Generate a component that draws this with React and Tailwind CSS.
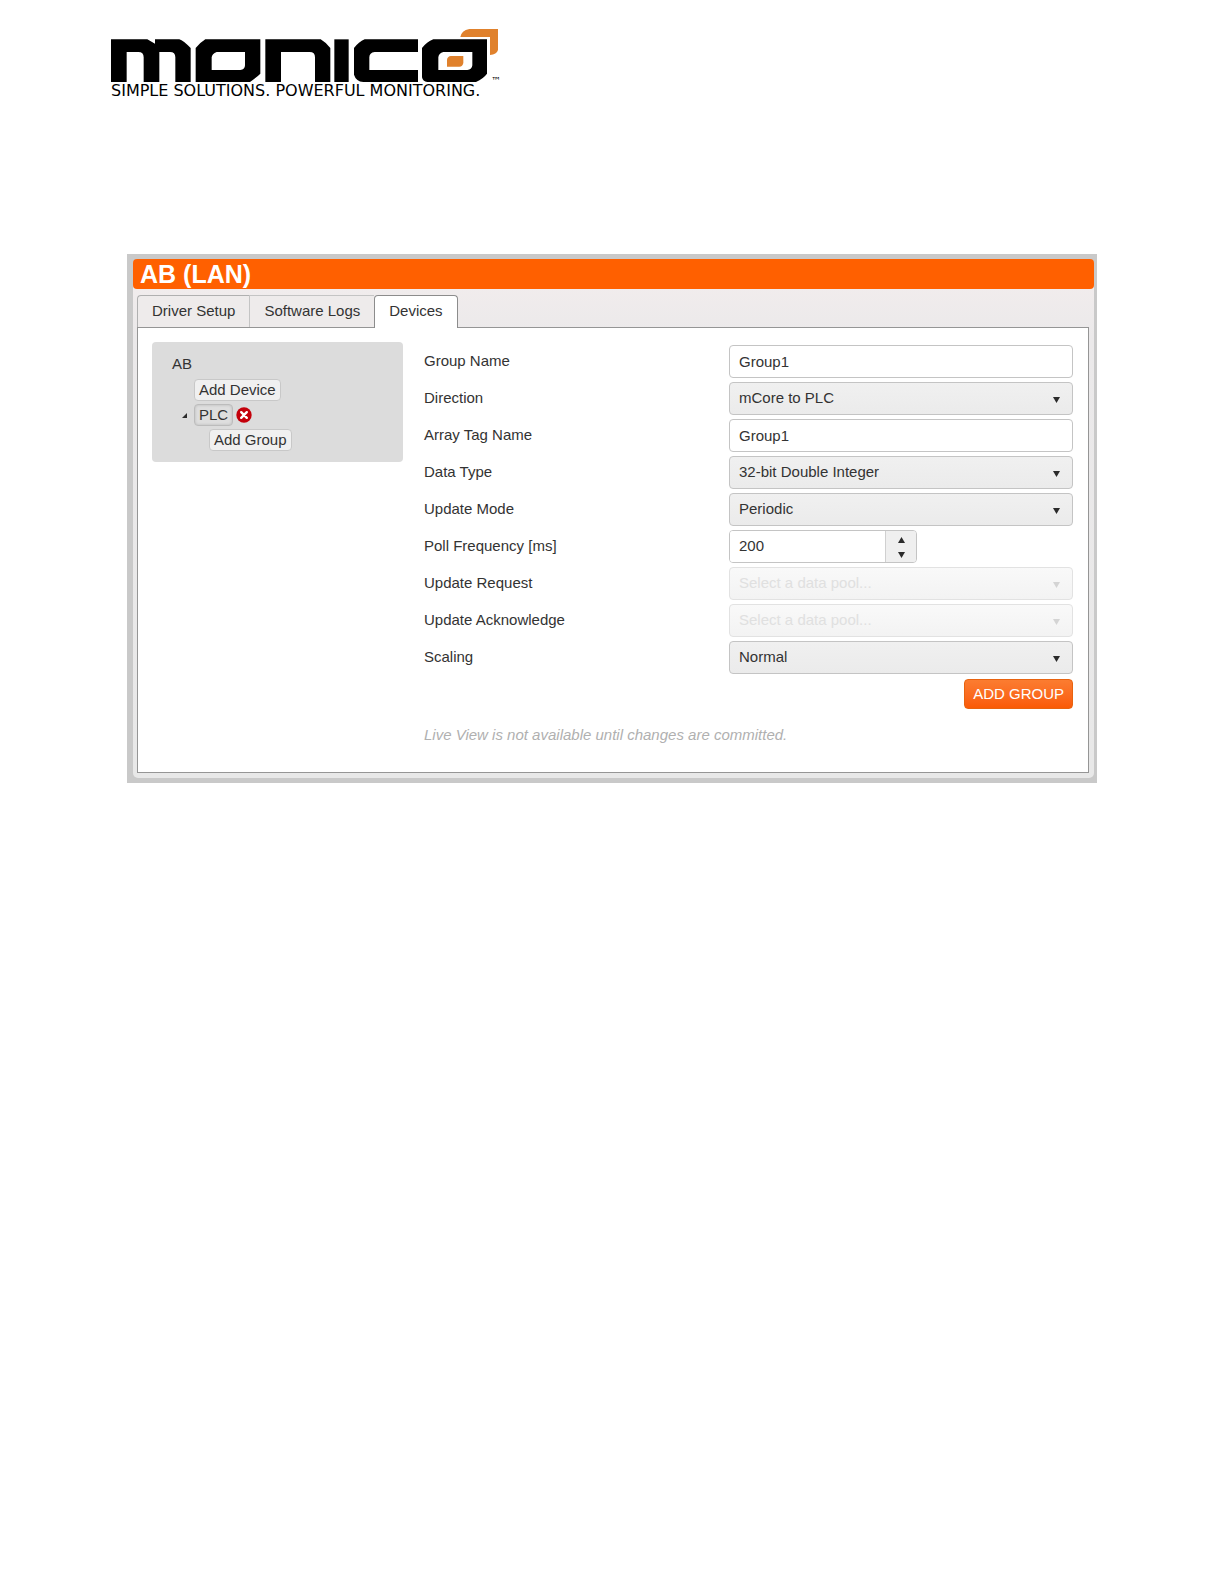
import { useState } from "react";

function Logo() {
  return (
    <div className="w-[390px]">
      <svg viewBox="33 27 1170 162" className="block h-[54px] w-full" role="img" aria-label="Monico">
        <g fill="#000" fillRule="evenodd">
          <path d="M33 58H142L165 71V58H238Q250 62 272 84V186H226V112Q226 96 210 96H178V186H131V112Q131 96 115 96H80V186H33Z" />
          <path d="M316 58H481V161Q470 172 450 186H287V84Q300 68 316 58ZM350 96Q336 102 335 112V150H421Q435 148 435 136V96Z" />
          <path d="M496 58H662Q676 66 691 84V186H645V112Q645 96 629 96H543V186H496Z" />
          <path d="M703 58H746V186H703Z" />
          <path d="M794 58H954V96H824Q808 98 808 112V150H954V186H790Q768 184 762 164V84Q776 66 794 58Z" />
          <path d="M1000 58H1161V161Q1150 176 1128 186H982Q968 184 966 172V84Q980 66 1000 58ZM1030 96Q1016 100 1015 112V150H1102Q1116 148 1117 136V96Z" />
        </g>
        <g fill="#e0812c">
          <path d="M1053 108H1090V129Q1088 140 1078 140H1041V120Q1042 109 1053 108Z" />
          <path d="M1108 27H1194V90Q1190 104 1170 105V51H1081Q1084 32 1108 27Z" />
        </g>
      </svg>
      <div className="flex items-start whitespace-nowrap font-['DejaVu_Sans',sans-serif] text-base leading-4 text-black">
        <span className="grow">SIMPLE SOLUTIONS. POWERFUL MONITORING.</span>
        <span className="-mt-2 text-[10px] leading-3">™</span>
      </div>
    </div>
  );
}

function Triangle({ up = false, className = "" }) {
  return (
    <svg viewBox="0 0 7 6" className={`h-[6px] w-[7px] ${className}`} fill="currentColor" aria-hidden="true">
      <path d={up ? "M0 6L3.5 0L7 6Z" : "M0 0H7L3.5 6Z"} />
    </svg>
  );
}

function Row({ id, label, children }) {
  return (
    <div className="grid grid-cols-[47fr_53fr]">
      <label htmlFor={id} className="pt-[6px] leading-5">
        {label}
      </label>
      {children}
    </div>
  );
}

function TextField({ id, label, value }) {
  return (
    <Row id={id} label={label}>
      <input
        id={id}
        type="text"
        defaultValue={value}
        className="h-[33px] w-full min-w-0 rounded border border-[#c4c4c4] bg-white px-[9px]"
      />
    </Row>
  );
}

function SelectField({ id, label, value, disabled = false }) {
  return (
    <Row id={id} label={label}>
      <div className="relative">
        <select
          id={id}
          disabled={disabled}
          className="block h-[33px] w-full appearance-none rounded border border-[#c4c4c4] bg-linear-to-b from-[#f0f0f0] to-[#ebebeb] px-[9px] opacity-100 disabled:border-[#e2e2e2] disabled:from-[#f9f9f9] disabled:to-[#f3f3f3] disabled:text-[#e0e0e0]"
        >
          <option>{value}</option>
        </select>
        <Triangle
          className={`pointer-events-none absolute top-[15px] right-[13px] ${disabled ? "text-[#d4d4d4]" : "text-[#2b2b2b]"}`}
        />
      </div>
    </Row>
  );
}

function PollField() {
  const [value, setValue] = useState(200);
  return (
    <Row id="poll" label="Poll Frequency [ms]">
      <div className="flex h-[33px] w-[188px] overflow-hidden rounded border border-[#c4c4c4]">
        <input
          id="poll"
          type="text"
          inputMode="numeric"
          value={value}
          onChange={(e) => setValue(Number(e.target.value) || 0)}
          className="min-w-0 grow bg-white px-[9px]"
        />
        <div className="flex w-[31px] shrink-0 flex-col border-l border-[#d0d0d0] bg-[#efefef] text-[#2b2b2b]">
          <button type="button" aria-label="Increase" onClick={() => setValue(value + 1)} className="flex grow items-center justify-center pt-px">
            <Triangle up />
          </button>
          <button type="button" aria-label="Decrease" onClick={() => setValue(value - 1)} className="flex grow items-center justify-center">
            <Triangle />
          </button>
        </div>
      </div>
    </Row>
  );
}

function DeviceTree() {
  const button = "rounded-sm border border-[#c8c8c8] bg-[#f0f0f0] px-1 leading-5";
  return (
    <nav aria-label="Devices" className="w-[251px] shrink-0 self-start rounded bg-[#dcdcdc] pt-3 pb-[11px] pl-5">
      <div className="leading-5">AB</div>
      <ul className="flex flex-col items-start gap-[3px] pt-[5px]">
        <li className="flex pl-[22px]">
          <button type="button" className={button}>Add Device</button>
        </li>
        <li className="flex items-center pl-[10px]">
          <svg viewBox="0 0 5 5" className="mr-[7px] size-[5px]" fill="#2b2b2b" aria-hidden="true">
            <path d="M5 0V5H0Z" />
          </svg>
          <button type="button" className="rounded-sm border border-[#bcbcbc] bg-[#dedede] px-1 leading-5 shadow-[inset_0_0_3px_#b8b8b8]">
            PLC
          </button>
          <button type="button" aria-label="Remove PLC" className="ml-[3px]">
            <svg viewBox="0 0 16 16" className="size-4">
              <circle cx="8" cy="8" r="7.7" fill="#c4000a" />
              <path d="M5.2 5.2L10.8 10.8M10.8 5.2L5.2 10.8" stroke="#fff" strokeWidth="2.4" strokeLinecap="round" />
            </svg>
          </button>
        </li>
        <li className="flex pl-[37px]">
          <button type="button" className={button}>Add Group</button>
        </li>
      </ul>
    </nav>
  );
}

export default function App() {
  return (
    <div className="min-h-screen bg-white font-['Liberation_Sans',Arial,sans-serif] text-[15px] text-[#333]">
      <header className="pt-[29px] pl-[111px]">
        <Logo />
      </header>
      <main className="px-[127px] pt-[155px]">
        <section className="border-t-[5px] border-r-[3px] border-b-[5px] border-l-[6px] border-[#c9c9c9] bg-[#c9c9c9]">
          <div className="rounded-[5px] bg-linear-to-b from-[#f4eeee] via-[#ebe9ea] via-15% to-[#e8e8e8] pb-[5px]">
            <h1 className="rounded bg-[#ff6000] pl-[7px] text-[25px] leading-[30px] font-bold text-white">AB (LAN)</h1>
            <div className="pt-[6px] pr-[5px] pl-1">
              <div role="tablist" className="flex">
                <button type="button" role="tab" aria-selected="false" className="h-8 rounded-tl border-t border-l border-[#b0b0b0] bg-[#eeebeb] px-[14px]">
                  Driver Setup
                </button>
                <button type="button" role="tab" aria-selected="false" className="h-8 border-t border-l border-[#c4c4c4] bg-[#eeebeb] px-[14px]">
                  Software Logs
                </button>
                <button type="button" role="tab" aria-selected="true" className="relative -mb-px h-[33px] rounded-t-sm border border-b-0 border-[#8c8c8c] bg-white px-[14px] pb-px">
                  Devices
                </button>
              </div>
              <div role="tabpanel" className="flex gap-[21px] border border-[#959595] bg-white pt-[14px] pr-[15px] pb-[27px] pl-[14px]">
                <DeviceTree />
                <form className="min-w-0 grow pt-[3px]" onSubmit={(e) => e.preventDefault()}>
                  <div className="flex flex-col gap-1">
                    <TextField id="group" label="Group Name" value="Group1" />
                    <SelectField id="direction" label="Direction" value="mCore to PLC" />
                    <TextField id="array" label="Array Tag Name" value="Group1" />
                    <SelectField id="type" label="Data Type" value="32-bit Double Integer" />
                    <SelectField id="mode" label="Update Mode" value="Periodic" />
                    <PollField />
                    <SelectField id="request" label="Update Request" value="Select a data pool..." disabled />
                    <SelectField id="ack" label="Update Acknowledge" value="Select a data pool..." disabled />
                    <SelectField id="scaling" label="Scaling" value="Normal" />
                  </div>
                  <div className="flex justify-end pt-[5px]">
                    <button type="submit" className="h-[30px] rounded-sm border border-[#e8630f] bg-linear-to-b from-[#fb7c30] to-[#fa5a04] px-2 text-white">
                      ADD GROUP
                    </button>
                  </div>
                  <p className="pt-4 leading-5 text-[#b0b0b0] italic">Live View is not available until changes are committed.</p>
                </form>
              </div>
            </div>
          </div>
        </section>
      </main>
    </div>
  );
}
